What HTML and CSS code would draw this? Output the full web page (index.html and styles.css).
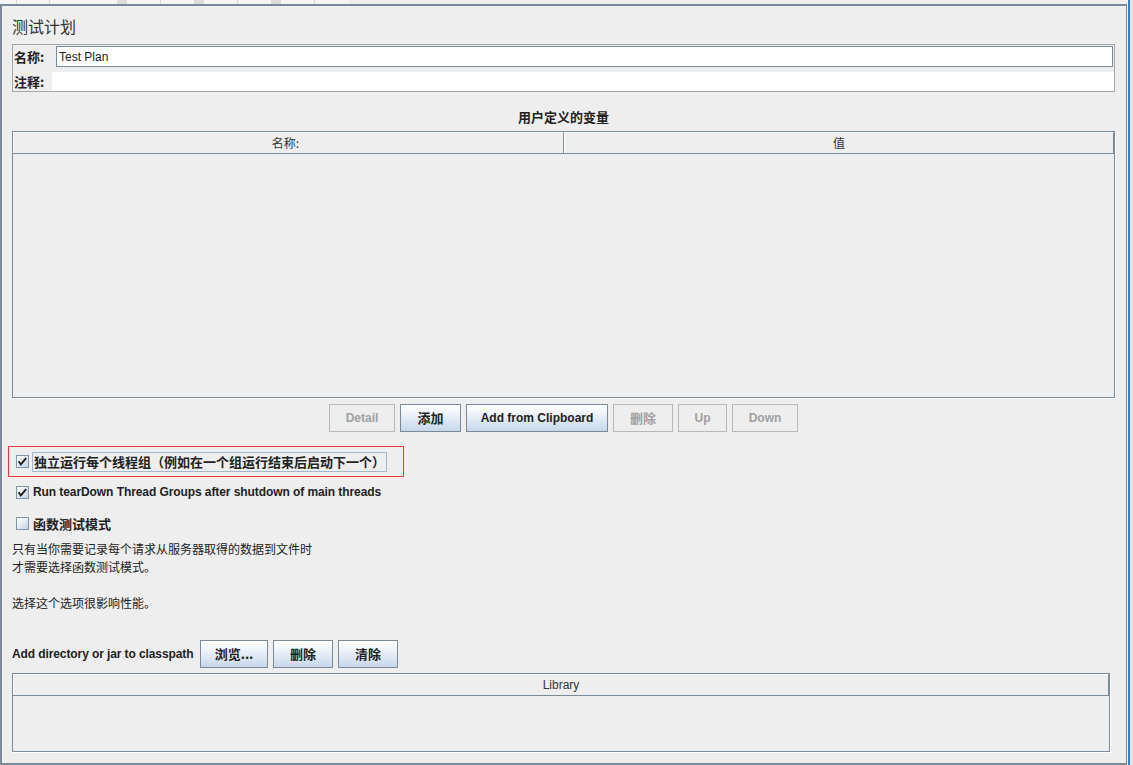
FILE: index.html
```html
<!DOCTYPE html>
<html lang="zh-CN">
<head>
<meta charset="utf-8">
<title>测试计划</title>
<link rel="stylesheet" href="styles.css">
</head>
<body>
<div class="screen">
  <div class="main">
    <div class="strip">
      <span class="sc w16"></span><span class="sep"></span>
      <span class="sc w32"></span><span class="sep"></span>
      <span class="sc w67"></span><span class="blk"></span>
      <span class="sc w33"></span><span class="sep"></span>
      <span class="sc w33"></span><span class="blk"></span>
      <span class="sc w33"></span><span class="sep"></span>
      <span class="sc w33"></span><span class="blk"></span>
      <span class="sc w33"></span><span class="sep"></span>
      <span class="sc w34"></span>
    </div>
    <div class="panel">
      <div class="title zh">测试计划</div>

      <div class="namebox">
        <div class="nrow r1">
          <span class="lbl zhb">名称:</span>
          <div class="field">Test Plan</div>
        </div>
        <div class="nrow r2">
          <span class="lbl l2 zhb">注释:</span>
          <div class="field2"></div>
        </div>
      </div>

      <div class="heading zhb">用户定义的变量</div>

      <div class="tbl vars">
        <div class="thead">
          <div class="th c1 zh">名称:</div>
          <div class="th c2 zh">值</div>
        </div>
        <div class="tbody vbody"></div>
      </div>

      <div class="btnrow">
        <button class="btn dis w66">Detail</button>
        <button class="btn w61 zhb">添加</button>
        <button class="btn w142">Add from Clipboard</button>
        <button class="btn dis w60 zhb">删除</button>
        <button class="btn dis w49">Up</button>
        <button class="btn dis w66">Down</button>
      </div>

      <div class="hl">
        <span class="cb"><svg viewBox="0 0 11 11" width="11" height="11"><path d="M1.7 5.2 L3.8 8.4 L9.2 2.2" fill="none" stroke="#1c1c1c" stroke-width="1.8"/></svg></span>
        <span class="focus zhb">独立运行每个线程组（例如在一个组运行结束后启动下一个）</span>
      </div>

      <div class="cbrow row2">
        <span class="cb"><svg viewBox="0 0 11 11" width="11" height="11"><path d="M1.7 5.2 L3.8 8.4 L9.2 2.2" fill="none" stroke="#1c1c1c" stroke-width="1.8"/></svg></span>
        <span class="cbtext">Run tearDown Thread Groups after shutdown of main threads</span>
      </div>

      <div class="cbrow row3">
        <span class="cb"></span>
        <span class="cbtext zhb">函数测试模式</span>
      </div>

      <div class="note zh">
        <div class="ln">只有当你需要记录每个请求从服务器取得的数据到文件时</div>
        <div class="ln">才需要选择函数测试模式。</div>
        <div class="ln"></div>
        <div class="ln">选择这个选项很影响性能。</div>
      </div>

      <div class="cprow">
        <span class="cplabel">Add directory or jar to classpath</span>
        <button class="btn w68 zhb">浏览...</button>
        <button class="btn w60 zhb">删除</button>
        <button class="btn w60 zhb">清除</button>
      </div>

      <div class="tbl lib">
        <div class="thead">
          <div class="th cl">Library</div>
        </div>
        <div class="tbody lbody"></div>
      </div>
    </div>
  </div>
  <div class="side"></div>
</div>
</body>
</html>
```

FILE: styles.css
```css
html, body {
  margin: 0;
  padding: 0;
}

body {
  background: #eeeeee;
  font-family: "Liberation Sans", "Noto Sans CJK SC", sans-serif;
  font-size: 12px;
  color: #333333;
}

.zh {
  font-family: "Noto Sans CJK SC", "Liberation Sans", sans-serif;
}

.zhb {
  font-family: "Noto Sans CJK SC", "Liberation Sans", sans-serif;
  font-weight: bold;
  font-size: 13px;
}

.screen {
  display: flex;
  width: 1133px;
  height: 765px;
  overflow: hidden;
}

.main {
  width: 1127px;
  display: flex;
  flex-direction: column;
}

/* thin strip of the component above */
.strip {
  height: 4px;
  display: flex;
  background: #eeeeee;
}
.strip .sc { height: 4px; background: #f5f5f5; }
.strip .sep { width: 1px; height: 4px; background: #d6d6d6; }
.strip .blk { width: 10px; height: 4px; background: #dcdcdc; }
.w16 { width: 16px; }
.w32 { width: 32px; }
.w67 { width: 67px; }
.w33 { width: 33px; }
.w34 { width: 34px; }

.panel {
  flex: 1;
  box-sizing: border-box;
  border-top: 2px solid #7a8a99;
  border-left: 2px solid #7a8a99;
  border-right: 1px solid #7a8a99;
  border-bottom: 2px solid #7a8a99;
  padding: 0 11px 0 10px;
  display: flex;
  flex-direction: column;
}

.side {
  width: 6px;
  background: linear-gradient(to right, #f4f4f4 0 1px, #3f7dbd 1px 3px, #e4e4e4 3px 6px);
}

.title {
  margin-top: 10px;
  height: 20px;
  line-height: 20px;
  font-size: 16px;
  color: #333333;
}

/* name / comment box */
.namebox {
  margin-top: 8px;
  border: 1px solid #a6a6a6;
  padding: 1px 0 0 0;
}
.nrow {
  display: flex;
  align-items: center;
}
.r1 { height: 21px; }
.r2 { height: 19px; margin-top: 5px; }
.lbl {
  flex: none;
  width: 43px;
  padding-left: 1px;
  box-sizing: border-box;
  line-height: 19px;
  color: #222222;
}
.l2 { width: 39px; }
.field {
  flex: 1;
  height: 21px;
  box-sizing: border-box;
  border: 1px solid #7a8a99;
  background: #ffffff;
  margin-right: 1px;
  padding-left: 2px;
  line-height: 20px;
  color: #222222;
}
.field2 {
  flex: 1;
  height: 19px;
  background: #ffffff;
}

.heading {
  margin-top: 17px;
  height: 16px;
  line-height: 16px;
  text-align: center;
  color: #222222;
}

/* tables */
.tbl {
  border: 1px solid #7a8a99;
  box-shadow: 1px 1px 0 #ffffff;
  background: #eeeeee;
}
.vars { margin-top: 6px; }
.lib { margin-top: 5px; width: 1098px; box-sizing: border-box; }
.thead {
  display: flex;
  height: 22px;
  box-sizing: border-box;
  border-bottom: 1px solid #7a8a99;
}
.th {
  box-sizing: border-box;
  border-top: 1px solid #ffffff;
  border-left: 1px solid #ffffff;
  border-right: 1px solid #7a8a99;
  text-align: center;
  line-height: 20px;
  color: #333333;
}
.c1 { width: 551px; padding-right: 6px; }
.c2 { flex: 1; }
.cl { flex: 1; }
.vbody { height: 243px; }
.lbody { height: 55px; }

/* buttons */
.btnrow {
  margin-top: 6px;
  display: flex;
  justify-content: center;
  gap: 5px;
}
.btn {
  height: 28px;
  box-sizing: border-box;
  border: 1px solid #7a8a99;
  background: linear-gradient(to bottom, #ffffff 0%, #f1f5fa 30%, #c6d7ea 100%);
  color: #222222;
  font-family: "Liberation Sans", "Noto Sans CJK SC", sans-serif;
  font-weight: bold;
  font-size: 12px;
  padding: 0;
  margin: 0;
}
.btn.zhb {
  font-family: "Noto Sans CJK SC", "Liberation Sans", sans-serif;
  font-size: 13px;
  padding-bottom: 1px;
}
.btn.dis {
  border-color: #b8b8b8;
  background: #eeeeee;
  color: #a0a0a0;
}
.w66 { width: 66px; }
.w61 { width: 61px; }
.w142 { width: 142px; }
.w60 { width: 60px; }
.w49 { width: 49px; }
.w68 { width: 68px; }

/* checkboxes */
.cb {
  flex: none;
  width: 13px;
  height: 13px;
  box-sizing: border-box;
  border: 1px solid #8295a8;
  background: linear-gradient(135deg, #ffffff 0%, #e6edf5 45%, #c3d2e3 100%);
  display: inline-flex;
}
.cb svg { display: block; }

.hl {
  margin-top: 14px;
  margin-left: -4px;
  width: 396px;
  height: 31px;
  box-sizing: border-box;
  border: 1px solid #e83a3a;
  padding-left: 7px;
  display: flex;
  align-items: center;
}
.focus {
  margin-left: 3px;
  height: 20px;
  box-sizing: border-box;
  border: 1px solid #a3b8cc;
  padding: 0 1px;
  line-height: 18px;
  color: #222222;
  white-space: nowrap;
}

.cbrow {
  height: 22px;
  padding-left: 4px;
  display: flex;
  align-items: center;
}
.row2 { margin-top: 4px; }
.row3 { margin-top: 9px; }
.cbtext {
  margin-left: 4px;
  font-weight: bold;
  color: #222222;
  white-space: nowrap;
}
.row2 .cbtext { letter-spacing: -0.08px; }

.note {
  margin-top: 6px;
  line-height: 18px;
  font-size: 12px;
  color: #222222;
}
.ln { height: 18px; }

.cprow {
  margin-top: 28px;
  display: flex;
  align-items: center;
  gap: 5px;
}
.cplabel {
  width: 183px;
  flex: none;
  font-weight: bold;
  color: #222222;
  white-space: nowrap;
  letter-spacing: -0.1px;
}
```
